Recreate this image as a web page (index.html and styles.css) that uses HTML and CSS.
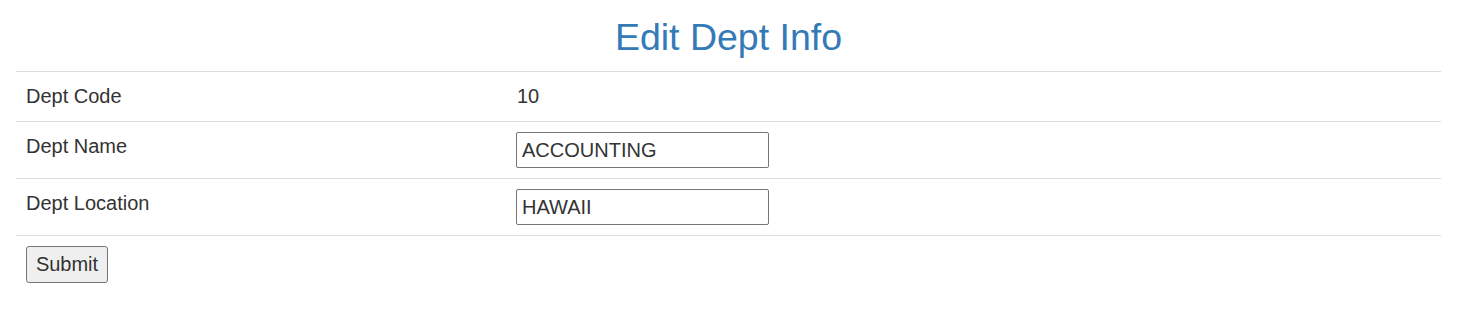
FILE: index.html
```html
<!DOCTYPE html>
<html>
<head>
    <meta charset="UTF-8">
    <title>Edit Dept Info</title>
    <link rel="stylesheet" href="styles.css">
</head>
<body>
<div id="container">
    <h1 class="title">Edit Dept Info</h1>
    <form action="#" method="post">
        <table id="dept">
            <tr>
                <td class="label">Dept Code</td>
                <td class="value">10</td>
            </tr>
            <tr>
                <td class="label">Dept Name</td>
                <td class="field"><input type="text" name="dname" value="ACCOUNTING" /></td>
            </tr>
            <tr>
                <td class="label">Dept Location</td>
                <td class="field"><input type="text" name="loc" value="HAWAII" /></td>
            </tr>
            <tr class="actions">
                <td colspan="2"><button type="submit">Submit</button></td>
            </tr>
        </table>
    </form>
</div>
</body>
</html>
```

FILE: styles.css
```css
body {
    margin: 0px;
    font-family: "Liberation Sans", Arial, sans-serif;
    font-size: 20px;
    color: #333333;
    background-color: #ffffff;
}

#container {
    padding: 0px 18px 0px 16px;
}

.title {
    margin: 18px 0px 15px 0px;
    font-size: 37.5px;
    font-weight: normal;
    line-height: 38px;
    text-align: center;
    color: #337AB7;
}

#dept {
    width: 100%;
    border-collapse: collapse;
}

#dept td {
    border-top: 1px solid #DDDDDD;
    padding: 11px 10px;
    line-height: 27px;
    vertical-align: top;
}

#dept td.label {
    width: 470px;
}

#dept td.value {
    padding-left: 11px;
}

#dept td.field {
    padding: 10px 10px;
}

input {
    display: block;
    box-sizing: border-box;
    width: 253px;
    height: 36px;
    margin: 0px;
    padding: 0px 5px;
    border: 1px solid #767676;
    border-radius: 2px;
    font-family: "Liberation Sans", Arial, sans-serif;
    font-size: 20px;
    color: #333333;
}

#dept tr.actions td {
    padding: 10px 10px;
}

button {
    box-sizing: border-box;
    height: 37px;
    width: 82px;
    margin: 0px;
    padding: 0px;
    border: 1px solid #767676;
    border-radius: 3px;
    background-color: #EFEFEF;
    font-family: "Liberation Sans", Arial, sans-serif;
    font-size: 20px;
    color: #333333;
}
```
